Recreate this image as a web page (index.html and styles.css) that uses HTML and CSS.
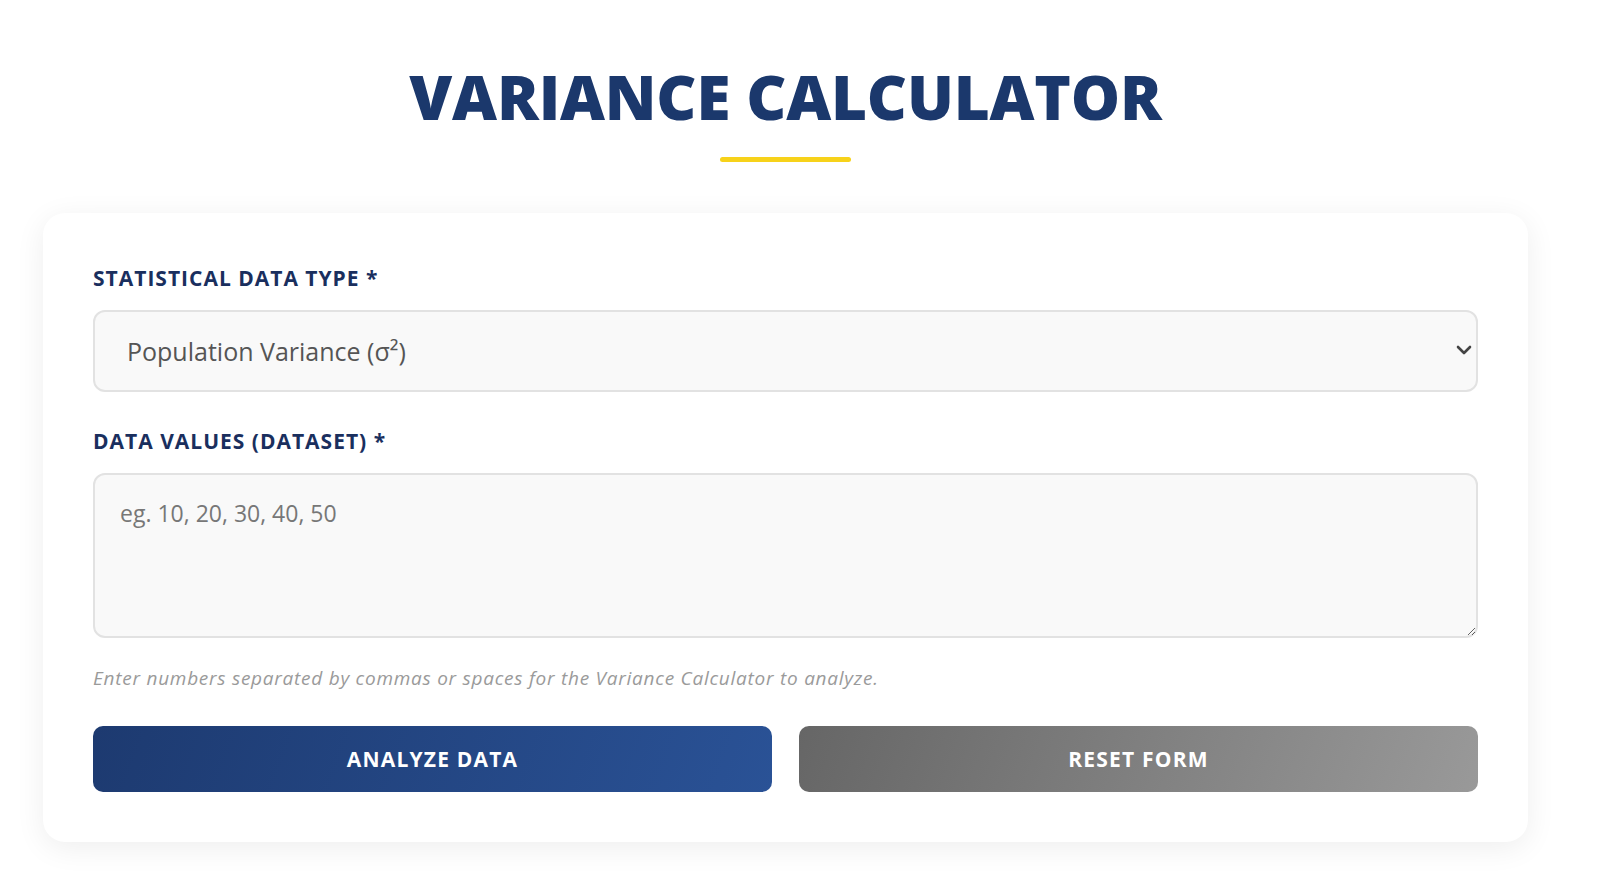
FILE: index.html
```html
<!DOCTYPE html>
<html lang="en">
<head>
<meta charset="utf-8">
<title>Variance Calculator</title>
<link rel="stylesheet" href="styles.css">
</head>
<body>
<div class="page">
  <header class="header">
    <h1 class="title">VARIANCE CALCULATOR</h1>
    <div class="title-bar"></div>
  </header>
  <form class="card">
    <div class="field">
      <label class="label" for="type">STATISTICAL DATA TYPE *</label>
      <div class="select-wrap">
        <select id="type" class="select">
          <option>Population Variance (σ²)</option>
          <option>Sample Variance (s²)</option>
        </select>
        <svg class="chevron" width="16" height="10" viewBox="0 0 16 10"><path d="M2 2 L8 8 L14 2" fill="none" stroke="#444" stroke-width="2.6" stroke-linecap="round" stroke-linejoin="round"/></svg>
      </div>
    </div>
    <div class="field field-data">
      <label class="label" for="data">DATA VALUES (DATASET) *</label>
      <textarea id="data" class="textarea" placeholder="eg. 10, 20, 30, 40, 50"></textarea>
      <p class="hint">Enter numbers separated by commas or spaces for the Variance Calculator to analyze.</p>
    </div>
    <div class="actions">
      <button type="button" class="btn btn-primary">ANALYZE DATA</button>
      <button type="button" class="btn btn-secondary">RESET FORM</button>
    </div>
  </form>
</div>
</body>
</html>
```

FILE: styles.css
```css
* { box-sizing: border-box; }
html, body { margin: 0; padding: 0; background: #ffffff; }
body { font-family: "Open Sans", "Liberation Sans", sans-serif; color: #333; }

.page {
  width: 1485px;
  margin-left: 43px;
  padding-top: 58px;
  padding-bottom: 40px;
}

.header {
  display: flex;
  flex-direction: column;
  align-items: center;
}

.title {
  margin: 0;
  font-size: 62px;
  line-height: 76px;
  font-weight: 800;
  letter-spacing: -0.2px;
  color: #1b386c;
}

.title-bar {
  width: 131px;
  height: 5px;
  border-radius: 3px;
  background: #f7d21a;
  margin-top: 23px;
}

.card {
  margin-top: 51px;
  background: #fff;
  border-radius: 22px;
  box-shadow: 0 6px 30px rgba(0, 0, 0, 0.07);
  padding: 51px 50px 50px 50px;
}

.field { display: flex; flex-direction: column; }
.field-data { margin-top: 35px; }

.label {
  font-size: 21px;
  line-height: 28px;
  font-weight: 700;
  letter-spacing: 1px;
  color: #1a2f5e;
  margin-bottom: 18px;
}

.select-wrap { position: relative; }

.select {
  appearance: none;
  -webkit-appearance: none;
  width: 100%;
  height: 82px;
  border: 2px solid #e2e2e2;
  border-radius: 12px;
  background: #f9f9f9;
  padding: 0 32px;
  font-family: inherit;
  font-size: 25px;
  color: #555;
  outline: none;
}

.chevron {
  position: absolute;
  right: 6px;
  top: 35px;
  pointer-events: none;
}

.textarea {
  width: 100%;
  height: 165px;
  border: 2px solid #e2e2e2;
  border-radius: 12px;
  background: #f9f9f9;
  padding: 23px 25px;
  font-family: inherit;
  font-size: 23px;
  line-height: 30px;
  color: #555;
  resize: vertical;
  outline: none;
}
.textarea::placeholder { color: #777; }

.hint {
  margin: 28px 0 0 0;
  font-size: 19px;
  line-height: 24px;
  font-style: italic;
  letter-spacing: 0.75px;
  color: #9a9a9a;
}

.actions {
  margin-top: 36px;
  display: grid;
  grid-template-columns: 1fr 1fr;
  gap: 27px;
}

.btn {
  height: 66px;
  border: none;
  border-radius: 10px;
  font-family: inherit;
  font-size: 21px;
  font-weight: 700;
  letter-spacing: 1.2px;
  color: #fff;
  cursor: pointer;
}

.btn-primary { background: linear-gradient(110deg, #1d3a70 0%, #2a5296 100%); }
.btn-secondary { background: linear-gradient(110deg, #666666 0%, #999999 100%); }
```
